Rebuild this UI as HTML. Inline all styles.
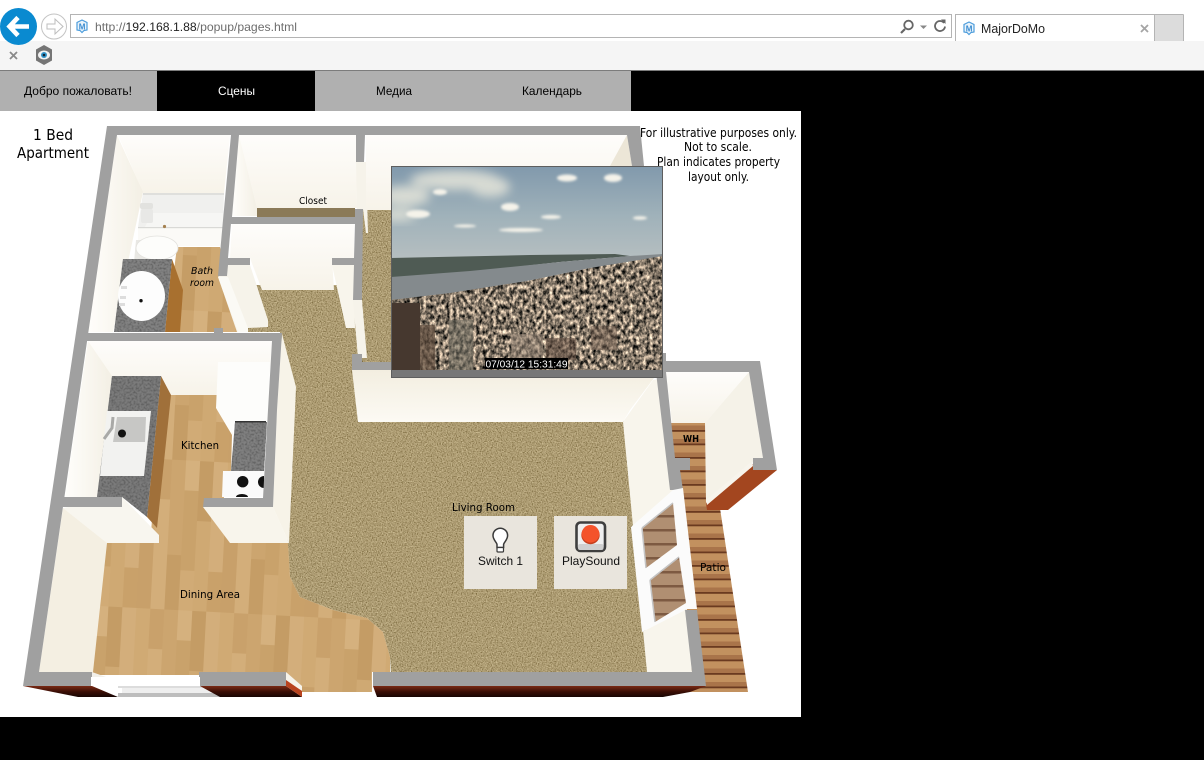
<!DOCTYPE html>
<html><head><meta charset="utf-8"><title>MajorDoMo</title>
<style>
html,body{margin:0;padding:0;background:#000;width:1204px;height:760px;overflow:hidden}
svg{display:block}
text{font-family:"Liberation Sans",sans-serif}
.d text{font-family:"DejaVu Sans",sans-serif}
</style></head><body>
<svg width="1204" height="760" viewBox="0 0 1204 760" xmlns="http://www.w3.org/2000/svg">
<defs>
<filter id="carpet" x="0" y="0" width="1" height="1" color-interpolation-filters="sRGB">
<feTurbulence type="fractalNoise" baseFrequency=".8" numOctaves="2" seed="3" result="n"/>
<feColorMatrix in="n" type="matrix" values="0 0 0 0 .42 0 0 0 0 .35 0 0 0 0 .18 2.2 0 0 0 -.95" result="s"/>
<feComposite in="s" in2="SourceGraphic" operator="in" result="s2"/>
<feColorMatrix in="n" type="matrix" values="0 0 0 0 .88 0 0 0 0 .82 0 0 0 0 .66 0 2.2 0 0 -1.1" result="l"/>
<feComposite in="l" in2="SourceGraphic" operator="in" result="l2"/>
<feMerge><feMergeNode in="SourceGraphic"/><feMergeNode in="s2"/><feMergeNode in="l2"/></feMerge>
</filter>
<filter id="stone" x="0" y="0" width="1" height="1" color-interpolation-filters="sRGB">
<feTurbulence type="fractalNoise" baseFrequency=".5" numOctaves="2" seed="5" result="n"/>
<feColorMatrix in="n" type="matrix" values="0 0 0 0 .3 0 0 0 0 .3 0 0 0 0 .3 1.6 0 0 0 -.65" result="s"/>
<feComposite in="s" in2="SourceGraphic" operator="in" result="s2"/>
<feMerge><feMergeNode in="SourceGraphic"/><feMergeNode in="s2"/></feMerge>
</filter>
<filter id="city" x="0" y="0" width="1" height="1" color-interpolation-filters="sRGB">
<feTurbulence type="fractalNoise" baseFrequency=".3 .2" numOctaves="3" seed="11" result="n"/>
<feColorMatrix in="n" type="matrix" values="1.8 0 0 0 -.38 1.6 0 0 0 -.33 1.4 0 0 0 -.29 0 0 0 0 1" result="s"/>
<feComposite in="s" in2="SourceGraphic" operator="in"/>
</filter>
<filter id="blur1"><feGaussianBlur stdDeviation="1.2"/></filter>
<filter id="blur4"><feGaussianBlur stdDeviation="5"/></filter>
<linearGradient id="sky" x1="0" y1="0" x2="0" y2="1"><stop offset="0" stop-color="#8199ac"/><stop offset=".55" stop-color="#a0b2ba"/><stop offset="1" stop-color="#b5bec0"/></linearGradient>
<linearGradient id="back" x1="0" y1="0" x2="0" y2="1"><stop offset="0" stop-color="#fefdfb"/><stop offset="1" stop-color="#f7f3e9"/></linearGradient>
<linearGradient id="backw" x1="0" y1="0" x2="0" y2="1"><stop offset="0" stop-color="#f3eee0"/><stop offset="1" stop-color="#fcfaf4"/></linearGradient>
<linearGradient id="side" x1="0" y1="0" x2="1" y2="0"><stop offset="0" stop-color="#fffefb"/><stop offset="1" stop-color="#f3efe4"/></linearGradient>
<linearGradient id="brick" x1="0" y1="0" x2="0" y2="1"><stop offset="0" stop-color="#7a2a14"/><stop offset=".5" stop-color="#3c0f06"/><stop offset="1" stop-color="#170503"/></linearGradient>
<pattern id="planks" width="60" height="13.5" patternUnits="userSpaceOnUse"><rect width="60" height="13.5" fill="#c2915f"/><rect width="60" height="1.800" y="11.500" fill="#6a3a20"/><rect y="7" width="60" height="4.500" fill="#a9744a"/></pattern>
<pattern id="glassp" width="60" height="14" patternUnits="userSpaceOnUse"><rect width="60" height="14" fill="#b08f72"/><rect width="60" height="2.500" y="11" fill="#7d5a42"/></pattern>
<pattern id="woodp" width="84" height="150" patternUnits="userSpaceOnUse" patternTransform="rotate(3)">
<rect width="84" height="150" fill="#cda670"/>
<rect x="0" y="0" width="14" height="70" fill="#d0aa74"/><rect x="0" y="70" width="14" height="80" fill="#c8a06a"/>
<rect x="14" y="0" width="14" height="40" fill="#c9a16b"/><rect x="14" y="40" width="14" height="110" fill="#d3ae7a"/>
<rect x="28" y="0" width="14" height="95" fill="#cca56f"/><rect x="28" y="95" width="14" height="55" fill="#c59d66"/>
<rect x="42" y="0" width="14" height="30" fill="#d5b17e"/><rect x="42" y="30" width="14" height="80" fill="#c9a26b"/><rect x="42" y="110" width="14" height="40" fill="#d1ab76"/>
<rect x="56" y="0" width="14" height="60" fill="#c49c65"/><rect x="56" y="60" width="14" height="90" fill="#cfa973"/>
<rect x="70" y="0" width="14" height="110" fill="#d3ae7b"/><rect x="70" y="110" width="14" height="40" fill="#c9a16a"/>
</pattern>
<clipPath id="ph"><rect x="391" y="166" width="272" height="204"/></clipPath>
</defs>

<!-- browser chrome -->
<rect width="1204" height="41" fill="#fff"/>
<rect y="41" width="1204" height="29" fill="#f5f5f5"/>
<rect y="70" width="1204" height="1" fill="#7c7c7c"/>
<circle cx="18.500" cy="26.500" r="18.500" fill="#0a8ad0"/>
<path d="M9.500 26.500H29M18 17.500 9.500 26.500 18 35.500" fill="none" stroke="#fff" stroke-width="4.600"/>
<circle cx="54" cy="26.500" r="12.500" fill="#fff" stroke="#c4c4c4"/>
<path d="M47 24h8v-5l8 7.500-8 7.500v-5h-8z" fill="#fff" stroke="#bdbdbd"/>
<rect x="70.500" y="14.500" width="881" height="23" fill="#fff" stroke="#b4b4b4"/>
<path d="M82 20l5 2.500v7.500l-3 .5-2 2-2-2-3-.5v-7.500z" fill="#eaf4fb" stroke="#4d9ddc" stroke-width="1.200"/>
<text x="78.800" y="29.500" font-size="8" font-weight="bold" fill="#3a8bd0">M</text>
<text x="95" y="31" font-size="12" fill="#6d6d6d" textLength="202" lengthAdjust="spacingAndGlyphs">http://<tspan fill="#222">192.168.1.88</tspan>/popup/pages.html</text>
<circle cx="908.500" cy="25" r="4.300" fill="none" stroke="#666" stroke-width="1.800"/>
<path d="M905 29l-4 4" stroke="#666" stroke-width="2.200"/>
<path d="M920 25.500h7l-3.500 3.500z" fill="#888"/>
<path d="M944 23a5 5 0 1 0 1 3.500" fill="none" stroke="#666" stroke-width="1.800"/>
<path d="M941 19.500l4.500 0v4.500z" fill="#666"/>
<path d="M955.500 41V14.500H1155" fill="#fff" stroke="#b4b4b4"/>
<rect x="956" y="15" width="198" height="26" fill="#fff"/>
<rect x="1155" y="15" width="28" height="26" fill="#dcdcdc"/>
<path d="M1183.500 14.500V41M1155 14.500H1183.500M1154.500 14.500V41" fill="none" stroke="#b4b4b4"/>
<path d="M969 22l5 2.500v7.500l-3 .5-2 2-2-2-3-.5v-7.500z" fill="#eaf4fb" stroke="#4d9ddc" stroke-width="1.200"/>
<text x="965.800" y="31.500" font-size="8" font-weight="bold" fill="#3a8bd0">M</text>
<text x="981" y="33" font-size="12.500" fill="#222" textLength="64" lengthAdjust="spacingAndGlyphs">MajorDoMo</text>
<path d="M1141 25l7 7M1148 25l-7 7" stroke="#a5a5a5" stroke-width="1.800"/>
<path d="M10 52l7 7M17 52l-7 7" stroke="#8a8a8a" stroke-width="1.800"/>
<path d="M44 45l8 4.500v11l-8 4.500-8-4.500v-11z" fill="#757575"/>
<ellipse cx="44" cy="55" rx="6" ry="4.500" fill="#f2f2f2"/>
<circle cx="44" cy="55" r="3" fill="#2f93c9"/><circle cx="44" cy="55" r="1.300" fill="#123"/>

<!-- tabs -->
<rect y="71" width="157" height="40" fill="#b0b0b0"/>
<rect x="315" y="71" width="316" height="40" fill="#b0b0b0"/>
<text x="24" y="95" font-size="12" fill="#000" textLength="108" lengthAdjust="spacingAndGlyphs">Добро пожаловать!</text>
<text x="218" y="95" font-size="12" fill="#fff" textLength="37" lengthAdjust="spacingAndGlyphs">Сцены</text>
<text x="376" y="95" font-size="12" fill="#000" textLength="36" lengthAdjust="spacingAndGlyphs">Медиа</text>
<text x="522" y="95" font-size="12" fill="#000" textLength="60" lengthAdjust="spacingAndGlyphs">Календарь</text>

<!-- plan background -->
<rect y="111" width="801" height="606" fill="#fff"/>

<!-- patio -->
<polygon points="671,423 707,423 748,692 690,692" fill="url(#planks)"/>

<!-- floors -->
<polygon filter="url(#carpet)" fill="#b4a37a" points="250,285 345,285 366,360 352,415 623,415 650,675 372,675 391,675 390,657 383,632 367,618 333,610 300,597 290,577 287,530 290,390 280,332 245,332"/>
<polygon filter="url(#carpet)" fill="#b4a37a" points="362,205 400,205 400,425 350,425 350,330"/>
<polygon fill="url(#woodp)" points="106,543 288,543 290,577 300,597 333,610 367,618 383,632 390,657 390,672 372,672 372,692 302,692 286,675 92,675"/>
<polygon fill="url(#woodp)" points="162,395 268,395 234,410 232,435 231,470 222,505 232,545 150,545"/>
<polygon fill="url(#woodp)" points="177,247 220,247 238,332 166,332"/>

<!-- bathroom -->
<polygon points="118,135 230,135 224,193 143,193" fill="url(#back)"/>
<polygon points="117,135 143,192 113,332 88,332" fill="url(#side)"/>
<polygon points="143,193 224,193 223,227 138,227" fill="#f0f0ee"/>
<polygon points="143,193 224,193 224,195 143,195" fill="#dfdfdc"/>
<polygon points="152,213 223,213 223,227 145,227" fill="#f6f6f4"/>
<polygon points="138,228 223,228 222,246 177,246 172,258 138,246" fill="#fbfaf7"/>
<rect x="138" y="227" width="85" height="1.200" fill="#d9d9d6"/>
<rect x="140" y="203" width="13" height="6" rx="2" fill="#e2e2df"/><rect x="141" y="209" width="12" height="14" rx="2" fill="#e8e8e6"/>
<circle cx="164.500" cy="226.500" r="1.600" fill="#a4814f"/>
<polygon points="136,240 150,240 145,262 134,262" fill="#e9e8e4"/>
<ellipse cx="157" cy="248" rx="21" ry="12" fill="#fdfdfb" stroke="#e3e2de" stroke-width=".8"/>
<polygon points="172,259 183,290 180,332 165,332" fill="#a8702f"/>
<polygon filter="url(#stone)" fill="#828282" points="123,259 172,259 165,332 114,332"/>
<ellipse cx="141.500" cy="296" rx="23.500" ry="25" fill="#fdfdfd"/>
<circle cx="141" cy="300.700" r="1.700" fill="#111"/>
<rect x="121" y="286" width="6" height="3" fill="#ddd"/><rect x="120" y="296" width="6" height="3" fill="#ddd"/><rect x="119" y="303" width="6" height="3" fill="#ddd"/>

<!-- closet -->
<polygon points="239,135 356,135 357,208 257,208" fill="url(#back)"/>
<polygon points="239,135 257,208 257,216 232,216" fill="url(#side)"/>
<rect x="257" y="208" width="98" height="9" fill="#8b7a58"/>

<!-- hallway room -->
<polygon points="232,224 354,224 354,258 332,258 334,290 262,290 250,258 230,258" fill="url(#back)"/>
<polygon points="228,265 250,265 268,320 268,327 248,328 248,332 237,332 218,277" fill="#f6f3ea"/>
<polygon points="218,277 228,277 248,328 248,332 238,332" fill="#fbfaf5"/>
<polygon points="332,265 354,265 355,328 346,328" fill="#f8f5ec"/>
<polygon points="353,300 362,300 367,358 358,358" fill="#f6f3ea"/>
<polygon points="356,162 366,162 368,233 366,233 363,209 357,209" fill="#f6f3ea"/>

<!-- living room upper wall -->
<rect x="366" y="135" width="262" height="75" fill="url(#back)"/>
<polygon points="627,135 610,166 632,166" fill="#ece6d7"/>

<!-- living room lower back wall -->
<polygon points="352,370 660,370 630,410 623,422 358,422" fill="url(#backw)"/>
<polygon points="623,422 653,380 664,378 677,490 633,527 642,632 687,609 692,672 647,672" fill="#f8f5ec"/>

<!-- WH closet -->
<polygon points="666,372 749,372 705,423 672,423" fill="url(#back)"/>
<polygon points="749,372 763,458 753,458 753,462 706,503 705,423" fill="#f5f2e8"/>
<polygon points="706,503 753,464 777,470 728,510 707,510" fill="#a3461f"/>
<polygon points="706,500 752,461 753,466 707,505" fill="#f7f4ec"/>

<!-- kitchen -->
<polygon points="88,341 272,341 268,395 170,395 160,376 110,376" fill="url(#back)"/>
<polygon points="88,341 112,376 97,497 65,497" fill="url(#side)"/>
<polygon points="161,376 171,395 157,528 147,517" fill="#a0703a"/>
<polygon filter="url(#stone)" fill="#7b7b7b" points="112,376 161,376 147,517 122,497 97,497"/>
<polygon points="107,411 151,411 144,476 100,476" fill="#f2f2f0"/>
<polygon points="117,417 146,417 145,442 113,442" fill="#c7c7c5"/>
<circle cx="122" cy="433.500" r="4" fill="#111"/>
<path d="M104 439 112 428 113 417" fill="none" stroke="#a9a9a7" stroke-width="3"/>
<polygon points="218,362 270,362 268,422 234,422 232,435 216,408" fill="#fdfdfb"/>
<polygon filter="url(#stone)" fill="#808080" points="235,422 267,422 264,471 231,471"/>
<rect x="235" y="421" width="31" height="1.500" fill="#333"/>
<polygon points="223,471 264,471 263,497 222,497" fill="#fafafa"/>
<circle cx="242.700" cy="481.700" r="5.700" fill="#111"/>
<path d="M264 476a6 6 0 0 0 0 12z" fill="#111"/>
<path d="M236 497a6 3 0 0 1 12 0z" fill="#111"/>

<!-- kitchen outer faces, dining walls -->
<polygon points="282,334 296,387 295,410 289,543 273,507 277,410" fill="#f7f3e8"/>
<polygon points="122,497 159,535 159,543 107,543 63,508" fill="#f8f6ef"/>
<polygon points="203,507 273,507 289,543 230,543" fill="#f8f5ec"/>
<polygon points="63,508 107,543 93,672 39,672" fill="#f4efe2"/>

<!-- gray walls -->
<g fill="#a0a0a0">
<polygon points="107,126 640,126 644,166 632,166 627,135 117,135 39,672 92,672 92,686 23,686"/>
<polygon points="231,135 239,135 232,217 231,223 228,258 250,258 250,265 228,265 227,276 218,276 223,220"/>
<rect x="231" y="217" width="126" height="7"/>
<polygon points="355,209 363,209 362,300 353,300 354,265 332,265 332,258 354,258 355,223"/>
<polygon points="356,135 365,135 364,162 356,162"/>
<polygon points="87,333 214,333 214,328 223,328 223,333 282,333 277,410 273,507 203,507 204,498 263,498 268,410 272,341 87,341"/>
<polygon points="63,497 122,497 122,507 63,507"/>
<polygon points="352,354 362,354 362,362 395,362 395,370 352,370"/>
<polygon points="199,672 286,672 286,686 199,686"/>
<polygon points="373,672 692,672 685,610 697,610 706,686 373,686"/>
<polygon points="656,372 662,353 666,353 666,361 760,361 777,470 753,470 753,458 763,458 749,372 666,372 675,458 690,458 690,470 680,470 683,490 670,490"/>
</g>

<!-- window -->
<polygon points="631,527 673,490 683,488 697,609 687,609 642,632" fill="#fbfbfb"/>
<polygon points="642,528 673,503 677,545 646,568" fill="url(#glassp)"/>
<polygon points="650,580 679,557 686,603 655,622" fill="url(#glassp)"/>
<path d="M642 528 673 503M650 580 679 557M642 528 646 568M650 580 655 622" fill="none" stroke="#c4c4c4" stroke-width="1.500"/>

<!-- door + bricks -->
<polygon points="91,677 200,677 200,686 91,686" fill="#fff"/>
<polygon points="92,672 106,677 92,677" fill="#f2f0ea"/>
<rect x="118" y="686" width="102" height="2" fill="#dcdcdc"/>
<rect x="122" y="688" width="90" height="5" fill="#eee"/>
<rect x="118" y="693" width="102" height="4" fill="#bdbdbd"/>
<polygon points="23,686 92,686 118,697 78,697" fill="url(#brick)"/>
<polygon points="200,686 286,686 302,697 220,697" fill="url(#brick)"/>
<polygon points="373,686 706,686 690,692 663,697 377,697" fill="url(#brick)"/>
<polygon points="286,672 302,686 302,691 286,680" fill="#f6f3ea"/>
<polygon points="286,680 302,691 302,697 286,686" fill="#b9431e"/>

<!-- plan labels -->
<g class="d" fill="#000">
<text x="33" y="140" font-size="15" textLength="40" lengthAdjust="spacingAndGlyphs">1 Bed</text>
<text x="17" y="158" font-size="15" textLength="72" lengthAdjust="spacingAndGlyphs">Apartment</text>
<text x="640" y="137" font-size="12" textLength="157" lengthAdjust="spacingAndGlyphs">For illustrative purposes only.</text>
<text x="684" y="151" font-size="12" textLength="68" lengthAdjust="spacingAndGlyphs">Not to scale.</text>
<text x="657" y="166" font-size="12" textLength="123" lengthAdjust="spacingAndGlyphs">Plan indicates property</text>
<text x="688" y="181" font-size="12" textLength="61" lengthAdjust="spacingAndGlyphs">layout only.</text>
<text x="299" y="204" font-size="10" textLength="28" lengthAdjust="spacingAndGlyphs">Closet</text>
<text x="191" y="274" font-size="10" font-style="italic" textLength="22" lengthAdjust="spacingAndGlyphs">Bath</text>
<text x="190" y="286" font-size="10" font-style="italic" textLength="24" lengthAdjust="spacingAndGlyphs">room</text>
<text x="181" y="449" font-size="11" textLength="38" lengthAdjust="spacingAndGlyphs">Kitchen</text>
<text x="180" y="598" font-size="11" textLength="60" lengthAdjust="spacingAndGlyphs">Dining Area</text>
<text x="452" y="511" font-size="11" textLength="63" lengthAdjust="spacingAndGlyphs">Living Room</text>
<text x="683" y="442" font-size="10" font-weight="bold" textLength="16" lengthAdjust="spacingAndGlyphs">WH</text>
<text x="700" y="571" font-size="11" textLength="26" lengthAdjust="spacingAndGlyphs">Patio</text>
</g>

<!-- tiles -->
<rect x="464" y="516" width="73" height="73" fill="#e9e5dd"/>
<rect x="554" y="516" width="73" height="73" fill="#e9e5dd"/>
<path d="M497 547.500v-3c0-2-4-4.500-4-9a7.300 7.300 0 0 1 14.600 0c0 4.500-4 7-4 9v3z" fill="#fff" stroke="#3a3a3a" stroke-width="1.500"/>
<rect x="497" y="547.500" width="6.500" height="4.500" rx="1" fill="#fff" stroke="#3a3a3a" stroke-width="1.200"/>
<text x="478" y="565" font-size="12" fill="#111" textLength="45" lengthAdjust="spacingAndGlyphs">Switch 1</text>
<rect x="576.500" y="522.500" width="28.500" height="28.500" rx="4" fill="#efefef" stroke="#3f3f3f" stroke-width="2.600"/>
<rect x="578" y="544" width="25.500" height="6" rx="2" fill="#cfcfcf"/>
<circle cx="590.500" cy="535" r="9.200" fill="#c63f1e"/>
<circle cx="590.500" cy="533.800" r="8.800" fill="#f4532b"/>
<text x="562" y="565" font-size="12" fill="#111" textLength="58" lengthAdjust="spacingAndGlyphs">PlaySound</text>

<!-- camera photo -->
<g clip-path="url(#ph)">
<rect x="391" y="166" width="272" height="92" fill="url(#sky)"/>
<g fill="#e9e8dc" filter="url(#blur4)" opacity=".8">
<ellipse cx="455" cy="180" rx="45" ry="10"/><ellipse cx="490" cy="187" rx="20" ry="10"/><ellipse cx="405" cy="196" rx="25" ry="10"/><ellipse cx="398" cy="215" rx="18" ry="6"/>
</g>
<g fill="#f5f3ea" filter="url(#blur1)">
<ellipse cx="510" cy="207" rx="9" ry="4"/><ellipse cx="567" cy="178" rx="10" ry="3.500"/><ellipse cx="613" cy="178" rx="9" ry="4"/><ellipse cx="551" cy="217" rx="10" ry="2"/><ellipse cx="521" cy="230" rx="22" ry="2"/><ellipse cx="640" cy="218" rx="7" ry="1.800"/><ellipse cx="465" cy="226" rx="11" ry="1.500"/><ellipse cx="418" cy="214" rx="12" ry="4"/><ellipse cx="440" cy="192" rx="7" ry="3"/>
</g>
<polygon points="391,258 530,255 615,254 630,256 560,262 470,272 391,278" fill="#4f5b54"/>
<polygon points="391,277 470,271 560,262 630,256 663,254 663,258 590,268 527,281 460,293 391,300" fill="#848a8d"/>
<polygon filter="url(#city)" fill="#000" points="391,300 450,293 527,281 590,268 663,256 663,370 391,370"/>
<rect x="391" y="303" width="29" height="67" fill="#46382f"/>
<rect x="420" y="325" width="15" height="45" fill="#5c4a3c" opacity=".7"/>
<rect x="449" y="320" width="24" height="50" fill="#6f6c60" opacity=".6"/>
<rect x="511" y="334" width="32" height="26" fill="#8f8071" opacity=".5"/>
<rect x="546" y="338" width="30" height="22" fill="#5f493e" opacity=".5"/>
<rect x="591" y="326" width="26" height="24" fill="#6f5b4e" opacity=".5"/>
<rect x="485" y="358" width="83" height="11" fill="#000"/>
<text x="485.500" y="367.500" font-size="10" fill="#fff" textLength="82" lengthAdjust="spacingAndGlyphs">07/03/12 15:31:49</text>
</g>
<rect x="391" y="370" width="272" height="8" fill="#777"/>
<rect x="391.500" y="166.500" width="271" height="211" fill="none" stroke="#5e5e5e"/>
</svg>
</body></html>
